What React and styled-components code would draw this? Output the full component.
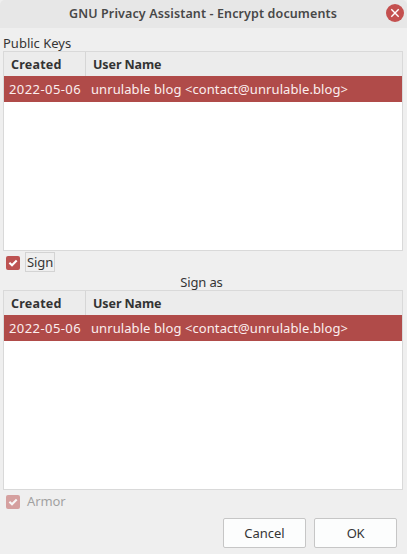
import React from "react";
import styled, { createGlobalStyle } from "styled-components";

const GlobalStyle = createGlobalStyle`
  * { box-sizing: border-box; }
  body { margin: 0; background: #efefef; }
`;

const Dialog = styled.div`
  width: 407px;
  height: 554px;
  display: flex;
  flex-direction: column;
  overflow: hidden;
  background: #efefef;
  color: #353535;
  font: 13px/18px "Noto Sans", "Open Sans", sans-serif;
  white-space: nowrap;
`;

const TitleBar = styled.header`
  height: 28px;
  flex: none;
  display: grid;
  grid-template-columns: 22px 1fr 23px;
  align-items: center;
  background: #e7e7e7;
  border-radius: 5px 5px 0 0;
`;

const Title = styled.h1`
  grid-column: 2;
  margin: 0 0 1px;
  text-align: center;
  font-size: 12.5px;
  line-height: 18px;
  font-weight: 600;
  letter-spacing: 0.12px;
  color: #484848;
`;

const CloseButton = styled.button`
  width: 18px;
  height: 18px;
  margin: 0 0 2px 2px;
  padding: 0;
  border: 0;
  border-radius: 50%;
  background: #c4504f;
  display: grid;
  place-items: center;
`;

const Caption = styled.div`
  height: ${(p) => p.$height}px;
  padding: ${(p) => p.$top}px 7px 0 3px;
  text-align: ${(p) => p.$align || "left"};
  letter-spacing: ${(p) => p.$spacing || 0}px;
  line-height: 16px;
  flex: none;
`;

const KeyTable = styled.section`
  height: 200px;
  margin: 0 4px 0 3px;
  flex: none;
  background: #fff;
  border: 1px solid #d9d9d9;
`;

const Row = styled.div`
  display: grid;
  grid-template-columns: 82px 1fr;
`;

const HeaderRow = styled(Row)`
  height: 24px;
  background: #ececec;
  color: #333;
  font-size: 12.5px;
  font-weight: 700;
`;

const HeaderCell = styled.div`
  height: 24px;
  padding: 0 7px;
  line-height: 25px;
  letter-spacing: ${(p) => p.$spacing}px;
  border-right: ${(p) => (p.$divided ? "1px solid #d6d6d6" : "0")};
`;

const KeyRow = styled(Row)`
  height: 26px;
  background: #b04b49;
  color: #fbeeee;
`;

const Cell = styled.div`
  padding-left: 5px;
  line-height: 26px;
  letter-spacing: ${(p) => p.$spacing}px;
`;

const CheckRow = styled.label`
  height: ${(p) => p.$height}px;
  flex: none;
  display: flex;
  align-items: flex-start;
  gap: 5px;
  padding: ${(p) => p.$top}px 0 0 6px;
  opacity: ${(p) => (p.$disabled ? 0.5 : 1)};
  color: ${(p) => (p.$disabled ? "#555" : "inherit")};
`;

const CheckBox = styled.span`
  width: 14px;
  height: 14px;
  margin-top: 4px;
  border-radius: 2px;
  background: #bd5352;
  display: grid;
  place-items: center;
`;

const CheckText = styled.span`
  height: 20px;
  padding: 0 1px;
  line-height: 18px;
  letter-spacing: ${(p) => p.$spacing}px;
  border: 1px solid ${(p) => (p.$focused ? "#d3d3d3" : "transparent")};
`;

const Actions = styled.footer`
  display: flex;
  justify-content: flex-end;
  gap: 8px;
  padding: 4px 10px 0 0;
`;

const Button = styled.button`
  width: 83px;
  height: 30px;
  padding: 0;
  border: 1px solid #c6c6c6;
  border-radius: 2px;
  background: #fcfdfd;
  color: #353535;
  font: inherit;
  letter-spacing: ${(p) => p.$spacing || 0}px;
`;

function KeyList() {
  return (
    <KeyTable>
      <HeaderRow>
        <HeaderCell $divided $spacing={0.22}>Created</HeaderCell>
        <HeaderCell $spacing={-0.1}>User Name</HeaderCell>
      </HeaderRow>
      <KeyRow>
        <Cell $spacing={0.42}>2022-05-06</Cell>
        <Cell $spacing={0.08}>unrulable blog &lt;contact@unrulable.blog&gt;</Cell>
      </KeyRow>
    </KeyTable>
  );
}

function Check() {
  return (
    <CheckBox>
      <svg width="14" height="14" viewBox="0 0 14 14">
        <path d="M3.4 6.8 6 9.3 10.7 4.4" fill="none" stroke="#fff" strokeWidth="2.1" />
      </svg>
    </CheckBox>
  );
}

export default function App() {
  return (
    <>
      <GlobalStyle />
      <Dialog>
        <TitleBar>
          <Title>GNU Privacy Assistant - Encrypt documents</Title>
          <CloseButton aria-label="Close">
            <svg width="18" height="18" viewBox="0 0 18 18">
              <path d="m5.3 5.3 7.4 7.4m0-7.4-7.4 7.4" stroke="#fff" strokeWidth="1.4" />
            </svg>
          </CloseButton>
        </TitleBar>
        <Caption $height={23} $top={7}>Public Keys</Caption>
        <KeyList />
        <CheckRow $height={22} $top={1}>
          <Check />
          <CheckText $focused $spacing={-0.1}>Sign</CheckText>
        </CheckRow>
        <Caption $height={17} $top={1} $align="center" $spacing={-0.15}>Sign as</Caption>
        <KeyList />
        <CheckRow $height={24} $top={1} $disabled>
          <Check />
          <CheckText $spacing={-0.1}>Armor</CheckText>
        </CheckRow>
        <Actions>
          <Button>Cancel</Button>
          <Button $spacing={-0.3}>OK</Button>
        </Actions>
      </Dialog>
    </>
  );
}
